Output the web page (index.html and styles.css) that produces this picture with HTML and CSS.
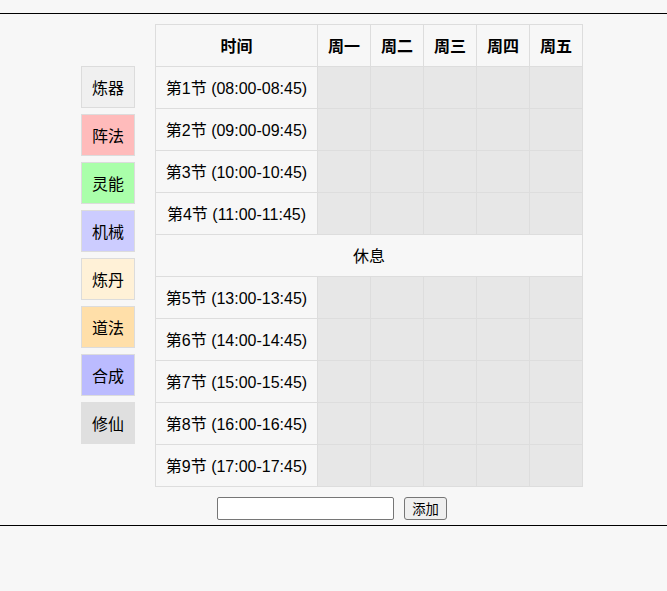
FILE: index.html
```html
<!DOCTYPE html>
<html lang="zh">
<head>
<meta charset="utf-8">
<title>课程表</title>
<link rel="stylesheet" href="styles.css">
</head>
<body>
<div class="page">
  <div class="main">
    <ul class="subjects">
      <li class="subj s1">炼器</li>
      <li class="subj s2">阵法</li>
      <li class="subj s3">灵能</li>
      <li class="subj s4">机械</li>
      <li class="subj s5">炼丹</li>
      <li class="subj s6">道法</li>
      <li class="subj s7">合成</li>
      <li class="subj s8">修仙</li>
    </ul>
    <table class="schedule">
      <colgroup>
        <col class="c-time"><col class="c-day"><col class="c-day"><col class="c-day"><col class="c-day"><col class="c-day">
      </colgroup>
      <thead>
        <tr><th>时间</th><th>周一</th><th>周二</th><th>周三</th><th>周四</th><th>周五</th></tr>
      </thead>
      <tbody>
        <tr><td class="time">第1节 (08:00-08:45)</td><td></td><td></td><td></td><td></td><td></td></tr>
        <tr><td class="time">第2节 (09:00-09:45)</td><td></td><td></td><td></td><td></td><td></td></tr>
        <tr><td class="time">第3节 (10:00-10:45)</td><td></td><td></td><td></td><td></td><td></td></tr>
        <tr><td class="time">第4节 (11:00-11:45)</td><td></td><td></td><td></td><td></td><td></td></tr>
        <tr><td class="rest" colspan="6">休息</td></tr>
        <tr><td class="time">第5节 (13:00-13:45)</td><td></td><td></td><td></td><td></td><td></td></tr>
        <tr><td class="time">第6节 (14:00-14:45)</td><td></td><td></td><td></td><td></td><td></td></tr>
        <tr><td class="time">第7节 (15:00-15:45)</td><td></td><td></td><td></td><td></td><td></td></tr>
        <tr><td class="time">第8节 (16:00-16:45)</td><td></td><td></td><td></td><td></td><td></td></tr>
        <tr><td class="time">第9节 (17:00-17:45)</td><td></td><td></td><td></td><td></td><td></td></tr>
      </tbody>
    </table>
  </div>
  <div class="add-row">
    <input class="add-input" type="text">
    <button class="add-btn" type="button">添加</button>
  </div>
</div>
</body>
</html>
```
FILE: styles.css
```css
html, body {
  margin: 0;
  padding: 0;
  background: #f7f7f7;
  font-family: "Liberation Sans", "Noto Sans CJK SC", sans-serif;
  font-size: 16px;
  color: #000;
}

.page {
  margin-top: 13px;
  border-top: 1px solid #000;
  border-bottom: 1px solid #000;
  padding: 10px 0 5px;
}

.main {
  display: flex;
  justify-content: center;
  align-items: flex-start;
  gap: 20px;
  padding-right: 3px;
}

.subjects {
  list-style: none;
  margin: 42px 0 0;
  padding: 0;
  display: flex;
  flex-direction: column;
  gap: 6px;
}

.subj {
  box-sizing: border-box;
  width: 54px;
  height: 42px;
  padding-top: 3px;
  border: 1px solid #dcdcdc;
  display: flex;
  align-items: center;
  justify-content: center;
  line-height: 20px;
}

.s1 { background: #f0f0f0; }
.s2 { background: #ffbbbb; }
.s3 { background: #aaffaa; }
.s4 { background: #ccccff; }
.s5 { background: #fff1d7; }
.s6 { background: #ffdfa9; }
.s7 { background: #bbbbff; }
.s8 { background: #dfdfdf; border-color: #dfdfdf; }

.schedule {
  border-collapse: collapse;
  table-layout: fixed;
  width: 428px;
}

.c-time { width: 162px; }
.c-day { width: 53px; }

.schedule th,
.schedule td {
  border: 1px solid #dddddd;
  height: 42px;
  padding: 2px 0 0;
  text-align: center;
  vertical-align: middle;
  line-height: 20px;
  box-sizing: border-box;
  white-space: nowrap;
}

.schedule th {
  font-weight: bold;
  background: #f7f7f7;
}

.schedule td {
  background: #e7e7e7;
}

.schedule td.time,
.schedule td.rest {
  background: #f7f7f7;
}

.add-row {
  display: flex;
  justify-content: center;
  gap: 10px;
  margin-top: 10px;
  padding-right: 3px;
}

.add-input {
  box-sizing: border-box;
  width: 177px;
  height: 23px;
  margin: 0;
  border: 1px solid #767676;
  border-radius: 2px;
  background: #fff;
  padding: 1px 2px;
}

.add-btn {
  box-sizing: border-box;
  width: 43px;
  height: 23px;
  margin: 0;
  padding: 0;
  border: 1px solid #767676;
  border-radius: 3px;
  background: #efefef;
  font-family: "Liberation Sans", "Noto Sans CJK SC", sans-serif;
  font-size: 13.33px;
  color: #000;
}
```
